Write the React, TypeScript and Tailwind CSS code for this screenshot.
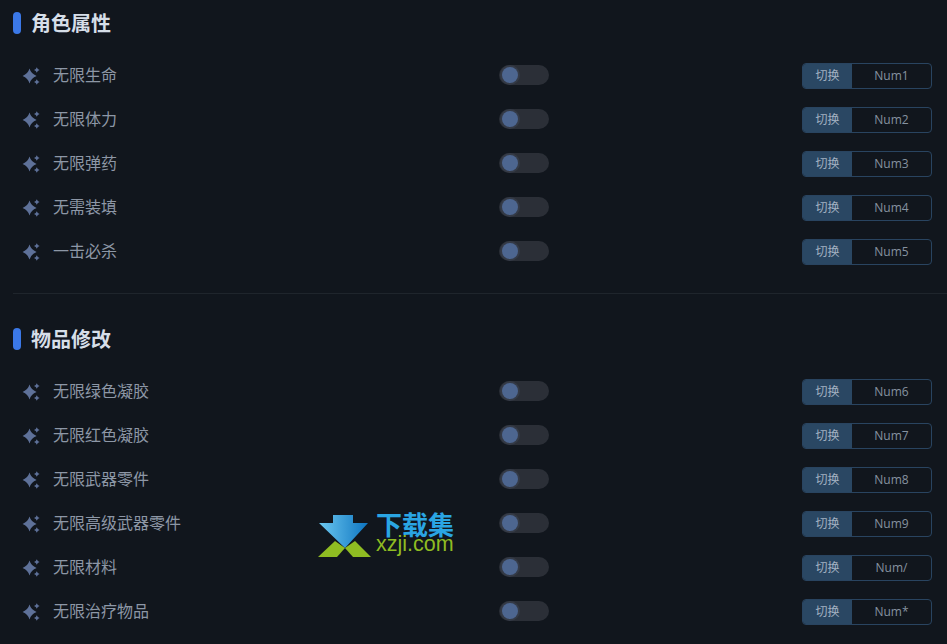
const groups = [
  {
    title: "角色属性",
    rows: [
      ["无限生命", "Num1"],
      ["无限体力", "Num2"],
      ["无限弹药", "Num3"],
      ["无需装填", "Num4"],
      ["一击必杀", "Num5"],
    ],
  },
  {
    title: "物品修改",
    rows: [
      ["无限绿色凝胶", "Num6"],
      ["无限红色凝胶", "Num7"],
      ["无限武器零件", "Num8"],
      ["无限高级武器零件", "Num9"],
      ["无限材料", "Num/"],
      ["无限治疗物品", "Num*"],
    ],
  },
];

function Sparkle() {
  return (
    <svg width="18" height="20" viewBox="0 0 18 20" fill="#5e7199" className="shrink-0">
      <path d="M7.5 3.6 Q9 8.8 14.6 11 Q9 13.2 7.5 18.4 Q6 13.2 0.6 11 Q6 8.8 7.5 3.6 Z" />
      <path d="M14.8 2.2 L15.8 4 L17.6 5 L15.8 6 L14.8 7.8 L13.8 6 L12 5 L13.8 4 Z" />
      <path d="M14.8 14.2 L15.8 16 L17.6 17 L15.8 18 L14.8 19.8 L13.8 18 L12 17 L13.8 16 Z" />
    </svg>
  );
}

function Row({ label, hotkey }: { label: string; hotkey: string }) {
  return (
    <div className="flex h-11 items-center">
      <div className="ml-[9px] flex w-[477px] items-center gap-[13px]">
        <Sparkle />
        <span className="text-base leading-5 text-[#8d97a6]">{label}</span>
      </div>
      <div className="flex h-5 w-[50px] items-center rounded-full bg-[#2b2f37] pl-[3px]">
        <div className="size-4 rounded-full bg-[#4d6690] shadow-[0_0_0_2px_#343a46]" />
      </div>
      <div className="mt-0.5 ml-[253px] flex h-[26px] w-[130px] overflow-hidden rounded border border-[#294460] text-xs">
        <div className="flex w-[49px] items-center justify-center bg-[#2a4763] text-[#a3b1c2]">切换</div>
        <div className="flex flex-1 items-center justify-center font-['Open_Sans',sans-serif] text-[#8692a0]">{hotkey}</div>
      </div>
    </div>
  );
}

export default function App() {
  return (
    <div className="relative h-[644px] w-[947px] overflow-hidden bg-[#11161d] pt-3 pl-[13px] font-['Inter','Noto_Sans_CJK_SC',sans-serif]">
      {groups.map((g, i) => (
        <section key={g.title}>
          {i > 0 && <div className="mt-5 mb-[34px] h-px w-[934px] bg-[#1f252c]" />}
          <div className="mb-[19px] flex h-[22px] items-center gap-[10px]">
            <div className="h-[22px] w-2 rounded bg-[#3b78e7]" />
            <h2 className="mt-0.5 text-xl leading-[22px] font-bold text-[#d6dee8]">{g.title}</h2>
          </div>
          {g.rows.map(([label, hotkey]) => (
            <Row key={hotkey} label={label} hotkey={hotkey} />
          ))}
        </section>
      ))}
      <div className="absolute top-[515px] left-[318px] flex items-start gap-1">
        <svg width="54" height="43" viewBox="0 0 54 43">
          <defs>
            <linearGradient id="arrow" x1="0" x2="1" y1="0" y2="0">
              <stop offset="0" stopColor="#6cc8f0" />
              <stop offset="1" stopColor="#0d74c0" />
            </linearGradient>
          </defs>
          <path d="M15 0 H35 V8 H50 L27 33 L1 8 H15 Z" fill="url(#arrow)" />
          <path d="M0 42 L17 26 L27 33 L19 42 Z" fill="#8fbc22" />
          <path d="M27 33 L37 26 L53 42 H35 Z" fill="#8fbc22" />
        </svg>
        <div className="flex flex-col">
          <span className="text-[26px] leading-[22px] font-bold text-[#2aa5e3]">下载集</span>
          <span className="-mt-0.5 font-['Liberation_Sans',sans-serif] text-[21.5px] leading-[19px] text-[#8fbc22]">xzji.com</span>
        </div>
      </div>
    </div>
  );
}
